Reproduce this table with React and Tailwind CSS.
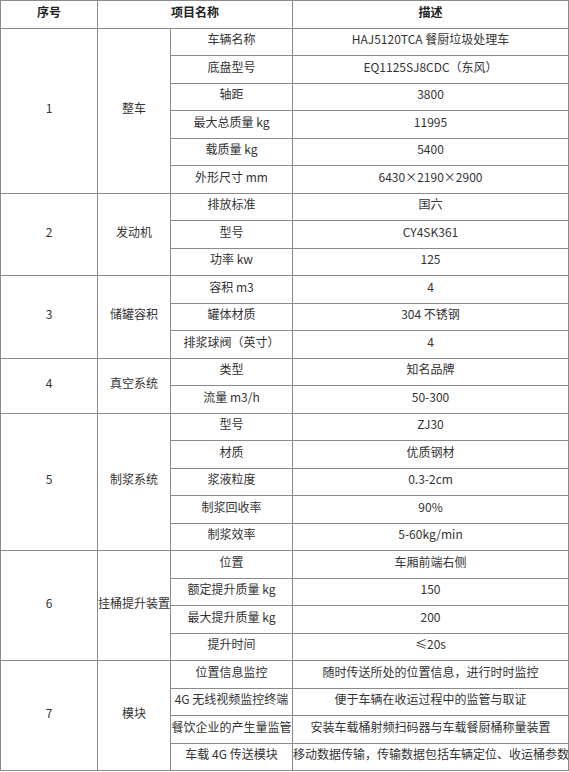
const GROUPS = [
  {
    no: "1",
    name: "整车",
    rows: [
      ["车辆名称", "HAJ5120TCA 餐厨垃圾处理车"],
      ["底盘型号", "EQ1125SJ8CDC（东风）"],
      ["轴距", "3800"],
      ["最大总质量 kg", "11995"],
      ["载质量 kg", "5400"],
      ["外形尺寸 mm", "6430×2190×2900"],
    ],
  },
  {
    no: "2",
    name: "发动机",
    rows: [
      ["排放标准", "国六"],
      ["型号", "CY4SK361"],
      ["功率 kw", "125"],
    ],
  },
  {
    no: "3",
    name: "储罐容积",
    rows: [
      ["容积 m3", "4"],
      ["罐体材质", "304 不锈钢"],
      ["排浆球阀（英寸）", "4"],
    ],
  },
  {
    no: "4",
    name: "真空系统",
    rows: [
      ["类型", "知名品牌"],
      ["流量 m3/h", "50-300"],
    ],
  },
  {
    no: "5",
    name: "制浆系统",
    rows: [
      ["型号", "ZJ30"],
      ["材质", "优质钢材"],
      ["浆液粒度", "0.3-2cm"],
      ["制浆回收率", "90%"],
      ["制浆效率", "5-60kg/min"],
    ],
  },
  {
    no: "6",
    name: "挂桶提升装置",
    rows: [
      ["位置", "车厢前端右侧"],
      ["额定提升质量 kg", "150"],
      ["最大提升质量 kg", "200"],
      ["提升时间", "≤20s"],
    ],
  },
  {
    no: "7",
    name: "模块",
    rows: [
      ["位置信息监控", "随时传送所处的位置信息，进行时时监控"],
      ["4G 无线视频监控终端", "便于车辆在收运过程中的监管与取证"],
      ["餐饮企业的产生量监管", "安装车载桶射频扫码器与车载餐厨桶称量装置"],
      ["车载 4G 传送模块", "移动数据传输，传输数据包括车辆定位、收运桶参数"],
    ],
  },
];

const cell =
  "border border-[#8a8a8a] p-0 pb-[5px] text-center align-middle whitespace-nowrap overflow-hidden leading-[20px]";

export default function App() {
  return (
    <div className="bg-white w-[569px] h-[772px] overflow-hidden">
      <table
        className="table-fixed border-collapse w-[568px] text-[12px] text-[#333]"
        style={{ fontFamily: '"Noto Sans CJK SC", "Noto Sans", sans-serif' }}
      >
        <colgroup>
          <col className="w-[97px]" />
          <col className="w-[73px]" />
          <col className="w-[122px]" />
          <col className="w-[276px]" />
        </colgroup>
        <thead>
          <tr className="h-[27.5px]">
            <th className={`${cell} font-bold text-[#222]`}>序号</th>
            <th className={`${cell} font-bold text-[#222]`} colSpan={2}>
              项目名称
            </th>
            <th className={`${cell} font-bold text-[#222]`}>描述</th>
          </tr>
        </thead>
        <tbody>
          {GROUPS.map((g) =>
            g.rows.map(([label, value], i) => (
              <tr key={g.no + "-" + i} className="h-[27.5px]">
                {i === 0 && (
                  <>
                    <td className={cell} rowSpan={g.rows.length}>
                      {g.no}
                    </td>
                    <td className={cell} rowSpan={g.rows.length}>
                      {g.name}
                    </td>
                  </>
                )}
                <td className={cell}>{label}</td>
                <td className={cell}>{value}</td>
              </tr>
            ))
          )}
        </tbody>
      </table>
    </div>
  );
}
